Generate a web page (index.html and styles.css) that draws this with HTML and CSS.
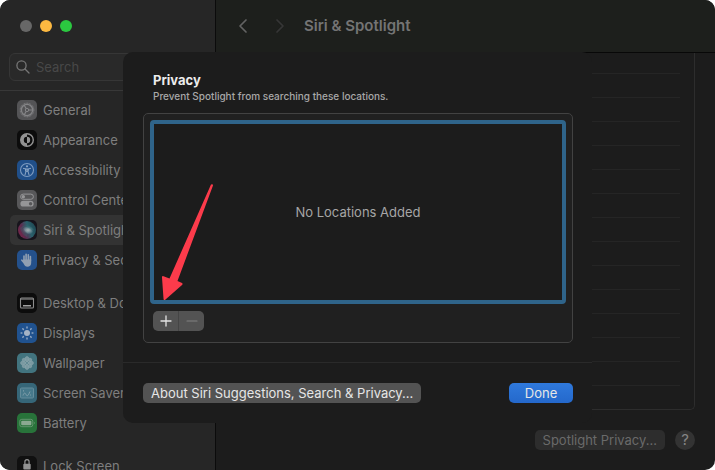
FILE: index.html
```
<!DOCTYPE html>
<html lang="en">
<head>
  <meta charset="UTF-8">
  <title>Siri &amp; Spotlight</title>
  <link rel="stylesheet" href="styles.css">
</head>
<body>
  <div class="window">
    <!-- Left column: window controls, search and settings list -->
    <aside class="sidebar">
      <div class="controls">
        <button class="dot dot-close" aria-label="Close"></button>
        <button class="dot dot-minimize" aria-label="Minimize"></button>
        <button class="dot dot-zoom" aria-label="Zoom"></button>
      </div>
      <label class="search">
        <svg width="14" height="14" viewBox="0 0 14 14" fill="none" stroke="#777" stroke-width="1.3" stroke-linecap="round"><circle cx="5.5" cy="5.5" r="4.6"/><path d="M9 9l4 4"/></svg>
        <input type="text" placeholder="Search" aria-label="Search">
      </label>
      <nav class="menu">
        <div class="group">
          <a class="item" href="#">
            <svg class="icon" viewBox="0 0 20 20"><rect width="20" height="20" rx="5" fill="#545456"/><g fill="none" stroke="#858587"><circle cx="10" cy="10" r="6.8" stroke-width="1" stroke-dasharray="1 .6"/><circle cx="10" cy="10" r="5.6" stroke-width="1.3"/><circle cx="10" cy="10" r="1.7"/><path d="M11.8 10h4M9.1 8.5l-2-3.5M9.1 11.5l-2 3.5" stroke-width="1.2"/></g></svg>
            General
          </a>
          <a class="item" href="#">
            <svg class="icon" viewBox="0 0 20 20"><rect width="20" height="20" rx="5" fill="#0c0c0c"/><circle cx="10" cy="10" r="6.3" fill="none" stroke="#929292" stroke-width="1.4"/><path d="M10 3.8a6.2 6.2 0 0 0 0 12.4v-3a3.2 3.2 0 0 1 0-6.4z" fill="#929292"/><path d="M10 6.8a3.2 3.2 0 0 1 0 6.4z" fill="#929292"/></svg>
            Appearance
          </a>
          <a class="item" href="#">
            <svg class="icon" viewBox="0 0 20 20"><rect width="20" height="20" rx="5" fill="#204f89"/><circle cx="10" cy="10" r="6.5" fill="none" stroke="#7d9bc0" stroke-width="1.1"/><circle cx="10" cy="6.3" r="1.1" fill="#8da7c6"/><path d="M6.4 8.4l2.6.6v2.4l-1 3.4M13.6 8.4l-2.6.6v2.4l1 3.4M9 9h2v2.3H9z" fill="none" stroke="#8da7c6" stroke-width="1" stroke-linecap="round"/></svg>
            Accessibility
          </a>
          <a class="item" href="#">
            <svg class="icon" viewBox="0 0 20 20"><rect width="20" height="20" rx="5" fill="#575759"/><rect x="3.6" y="4.1" width="12.8" height="5.2" rx="2.6" fill="none" stroke="#959597"/><circle cx="6.3" cy="6.7" r="1.7" fill="#959597"/><rect x="3.4" y="10.8" width="13.2" height="5.8" rx="2.9" fill="#959597"/><circle cx="13.6" cy="13.7" r="1.7" fill="#575759"/></svg>
            Control Center
          </a>
          <a class="item selected" href="#">
            <svg class="icon" viewBox="0 0 20 20">
              <defs>
                <linearGradient id="siri" x1="0" y1=".8" x2="1" y2=".4"><stop offset="0" stop-color="#7a2447"/><stop offset=".35" stop-color="#5c2c50"/><stop offset=".65" stop-color="#2b606c"/><stop offset="1" stop-color="#1f4a55"/></linearGradient>
                <radialGradient id="glow"><stop offset="0" stop-color="#a3adb0"/><stop offset="1" stop-color="#6f8c9b" stop-opacity="0"/></radialGradient>
              </defs>
              <rect width="20" height="20" rx="5" fill="#17141c"/><circle cx="10" cy="10" r="9" fill="url(#siri)"/><path d="M3 8q7-7 14 2-6-2-7 7-5-2-7-9" fill="#307c78" opacity=".3"/><path d="M5 6q8 1 12 7-3 3-6 1-4-3-6-8" fill="url(#glow)"/><ellipse cx="11" cy="10" rx="6" ry="4" fill="url(#glow)" opacity=".8"/>
            </svg>
            Siri &amp; Spotlight
          </a>
          <a class="item" href="#">
            <svg class="icon" viewBox="0 0 20 20"><rect width="20" height="20" rx="5" fill="#24518c"/><g fill="none" stroke="#91a0b2" stroke-width="1.6" stroke-linecap="round"><path d="M7 11V6M9.1 10V4.3M11.3 10V4.7M13.4 11V6.5M7.3 13l-2.4-2.8"/></g><path d="M6.2 9.5h8v3.2c0 2.4-1.6 4-3.8 4-1.8 0-2.9-1-3.6-2.6z" fill="#91a0b2"/></svg>
            Privacy &amp; Security
          </a>
        </div>
        <div class="group">
          <a class="item" href="#">
            <svg class="icon" viewBox="0 0 20 20"><rect width="20" height="20" rx="5" fill="#0c0c0c"/><rect x="3.5" y="5" width="13" height="10" rx="1" fill="none" stroke="#8c8c8c" stroke-width="1.1"/><path d="M3.5 6.1h13" stroke="#8c8c8c"/><path d="M6 12.8h8" stroke="#a0a0a0" stroke-width="1.6"/></svg>
            Desktop &amp; Dock
          </a>
          <a class="item" href="#">
            <svg class="icon" viewBox="0 0 20 20"><rect width="20" height="20" rx="5" fill="#20528f"/><circle cx="10" cy="10" r="3" fill="#a4b3c6"/><g stroke="#8ca3c0" stroke-width="1.5" stroke-linecap="round"><path d="M10 4.1v.8M10 15.1v.8M4.1 10h.8M15.1 10h.8M5.8 5.8l.6.6M13.6 13.6l.6.6M5.8 14.2l.6-.6M13.6 6.4l.6-.6"/></g></svg>
            Displays
          </a>
          <a class="item" href="#">
            <svg class="icon" viewBox="0 0 20 20"><rect width="20" height="20" rx="5" fill="#42747f"/><g fill="#7999a1" stroke="#92aab0" stroke-width=".5"><ellipse cx="10" cy="5.8" rx="1.8" ry="2.3"/><ellipse cx="10" cy="14.2" rx="1.8" ry="2.3"/><ellipse cx="5.8" cy="10" rx="2.3" ry="1.8"/><ellipse cx="14.2" cy="10" rx="2.3" ry="1.8"/><circle cx="7" cy="7" r="1.8"/><circle cx="13" cy="7" r="1.8"/><circle cx="7" cy="13" r="1.8"/><circle cx="13" cy="13" r="1.8"/></g><circle cx="10" cy="10" r="1.6" fill="#5d8791" stroke="#9bb0b5" stroke-width=".7"/></svg>
            Wallpaper
          </a>
          <a class="item" href="#">
            <svg class="icon" viewBox="0 0 20 20"><rect width="20" height="20" rx="5" fill="#366678"/><rect x="3.5" y="5" width="13" height="10" rx="1" fill="#47798b" stroke="#648c9b"/><path d="M6 12.5c1-3 2-3 3-1s2 2 4-3M6.5 7.2v1.3M13.5 11.5v1" fill="none" stroke="#84a2ad" stroke-width=".9"/></svg>
            Screen Saver
          </a>
          <a class="item" href="#">
            <svg class="icon" viewBox="0 0 20 20"><rect width="20" height="20" rx="5" fill="#28733a"/><rect x="2.8" y="6.3" width="13" height="7.4" rx="2" fill="none" stroke="#6b9975" stroke-width=".9"/><rect x="4.2" y="7.7" width="10.2" height="4.6" rx="1" fill="#8ba991"/><path d="M17 8.7q1.6 1.3 0 2.6z" fill="#6b9975"/></svg>
            Battery
          </a>
        </div>
        <div class="group">
          <a class="item" href="#">
            <svg class="icon" viewBox="0 0 20 20"><rect width="20" height="20" rx="5" fill="#101010"/><rect x="6.3" y="7.8" width="7.4" height="5.6" rx="1" fill="#929292"/><path d="M7.9 8V5.8a2.1 2.1 0 0 1 4.2 0V8" fill="none" stroke="#929292" stroke-width="1.2"/></svg>
            Lock Screen
          </a>
        </div>
      </nav>
    </aside>

    <!-- Right column: settings pane behind the sheet -->
    <main class="main">
      <header class="toolbar">
        <button class="nav-button" aria-label="Back"><svg width="10" height="16" viewBox="0 0 10 16" fill="none" stroke="#636363" stroke-width="1.7" stroke-linecap="round" stroke-linejoin="round"><path d="M8 2L2 8l6 6"/></svg></button>
        <button class="nav-button" aria-label="Forward"><svg width="10" height="16" viewBox="0 0 10 16" fill="none" stroke="#363636" stroke-width="1.7" stroke-linecap="round" stroke-linejoin="round"><path d="M2 2l6 6-6 6"/></svg></button>
        <h1>Siri &amp; Spotlight</h1>
      </header>
      <ul class="results">
        <li></li><li></li><li></li><li></li><li></li><li></li><li></li><li></li>
        <li></li><li></li><li></li><li></li><li></li><li></li><li></li>
      </ul>
      <footer class="footer">
        <button class="button dimmed">Spotlight Privacy...</button>
        <button class="help">?</button>
      </footer>
    </main>

    <!-- Privacy sheet -->
    <section class="sheet" role="dialog" aria-labelledby="sheetTitle">
      <div class="sheet-body">
        <h2 id="sheetTitle">Privacy</h2>
        <p>Prevent Spotlight from searching these locations.</p>
        <div class="panel">
          <div class="locations" tabindex="0">No Locations Added</div>
          <div class="segmented">
            <button aria-label="Add"><svg width="12" height="12" viewBox="0 0 12 12" stroke="#e4e4e4" stroke-width="1.3" stroke-linecap="round"><path d="M6 1v10M1 6h10"/></svg></button>
            <button aria-label="Remove" disabled><svg width="12" height="12" viewBox="0 0 12 12" stroke="#818181" stroke-width="1.2" stroke-linecap="round"><path d="M1 6h10"/></svg></button>
          </div>
        </div>
      </div>
      <div class="sheet-footer">
        <button class="button">About Siri Suggestions, Search &amp; Privacy...</button>
        <button class="button primary">Done</button>
      </div>
      <!-- Arrow pointing at the add button -->
      <svg class="arrow" width="54" height="122" viewBox="0 0 54 122"><path d="M51 1.5Q53 .5 53 2.5L17.5 98l4.500 2q1.200 1 0 2L5.500 116.500q-2 1.500-2-1L2 94.500q0-2 1.500-1.300L9.500 95.500z" fill="#fc3b4b"/></svg>
    </section>
  </div>
</body>
</html>
```
FILE: styles.css
```
* {
  box-sizing: border-box;
}
body {
  margin: 0;
  background: #fff;
  font-family: Inter, sans-serif;
  font-size: 13px;
  line-height: 16px;
}
button {
  border: 0;
  padding: 0;
  font: inherit;
}
svg {
  display: block;
  flex-shrink: 0;
}
.window {
  position: relative;
  display: flex;
  height: 100vh;
  overflow: hidden;
  border-radius: 10px;
  background: #1c1c1c;
}

/* Sidebar */
.sidebar {
  width: 216px;
  flex-shrink: 0;
  background: #262626;
  border-right: 1px solid #0b0b0b;
}
.controls {
  display: flex;
  gap: 8px;
  padding: 20px 20px 21px;
}
.dot {
  width: 12px;
  height: 12px;
  border-radius: 50%;
}
.dot-close {
  background: #676767;
}
.dot-minimize {
  background: #fdb941;
}
.dot-zoom {
  background: #2bc840;
}
.search {
  display: flex;
  align-items: center;
  gap: 6px;
  height: 28px;
  margin: 0 9px 9px;
  padding: 0 6px;
  border: 1px solid #363636;
  border-radius: 6px;
  background: #292929;
}
.search input {
  flex: 1;
  min-width: 0;
  padding: 0;
  border: 0;
  outline: 0;
  background: none;
  color: #8a8a8a;
  font: inherit;
}
.search input::placeholder {
  color: #484848;
}
.menu {
  padding: 4px 10px;
  border-top: 1px solid #383838;
}
.group {
  margin-bottom: 13px;
}
.item {
  display: flex;
  align-items: center;
  gap: 6px;
  height: 30px;
  padding: 0 7px;
  border-radius: 5px;
  color: #7e7e7e;
  white-space: nowrap;
  text-decoration: none;
}
.item.selected {
  background: #333;
}
.icon {
  width: 20px;
  height: 20px;
}

/* Settings pane */
.main {
  flex: 1;
  min-width: 0;
}
.toolbar {
  display: flex;
  align-items: center;
  height: 53px;
  padding-left: 22px;
  background: #1d1f1c;
  border-bottom: 1px solid #080808;
}
.nav-button {
  width: 10px;
  margin-right: 27px;
  background: none;
}
.toolbar h1 {
  margin: 0 0 0 -8px;
  color: #747474;
  font-size: 15px;
  font-weight: 600;
  line-height: 20px;
}
.results {
  margin: 0 20px;
  padding: 0 14px;
  list-style: none;
  border: 1px solid #2d2d2d;
  border-top: 0;
  border-radius: 0 0 5px 5px;
}
.results li {
  height: 24px;
  border-bottom: 1px solid #252525;
}
.results li:first-child {
  height: 21px;
}
.results li:last-child {
  height: 23px;
  border-bottom: 0;
}
.footer {
  display: flex;
  justify-content: flex-end;
  gap: 10px;
  padding: 20px;
}
.button {
  height: 20px;
  padding: 0 8px;
  border-radius: 5px;
  background: #535353;
  color: #e6e6e6;
  white-space: nowrap;
}
.button.dimmed {
  background: #2d2d2d;
  color: #6a6a6a;
}
.help {
  width: 20px;
  height: 20px;
  border-radius: 50%;
  background: #333;
  color: #858585;
  font-size: 15px;
}

/* Sheet lies over both columns */
.sheet {
  position: absolute;
  top: 52px;
  left: 123px;
  right: 123px;
  border-radius: 10px;
  background: #1c1c1c;
}
.sheet-body {
  padding: 20px 19px 19px 20px;
  border-bottom: 1px solid #2a2a2a;
}
.sheet h2 {
  margin: 0 10px;
  color: #ececec;
  font-size: 13px;
  line-height: 17px;
}
.sheet p {
  margin: 0 10px 10px;
  color: #a8a8a8;
  font-size: 10px;
  font-weight: 500;
  line-height: 14px;
}
.panel {
  padding: 6px;
  border: 1px solid #424242;
  border-radius: 5px;
  background: #202020;
}
.locations {
  display: flex;
  align-items: center;
  justify-content: center;
  height: 184px;
  border: 4px solid #2f648a;
  border-radius: 4px;
  background: #1c1c1c;
  color: #a6a6a6;
  outline: 0;
}
.segmented {
  display: inline-flex;
  margin: 7px 3px 5px;
  border-radius: 5px;
  background: #535353;
  vertical-align: top;
}
.segmented button {
  display: flex;
  align-items: center;
  justify-content: center;
  width: 25px;
  height: 20px;
  background: none;
}
.segmented button + button {
  width: 26px;
  border-left: 1px solid #454545;
}
.sheet-footer {
  display: flex;
  justify-content: space-between;
  padding: 20px 19px 20px 20px;
}
.button.primary {
  width: 64px;
  background: linear-gradient(#2f79dc, #2468cb);
}
.arrow {
  position: absolute;
  left: 37px;
  top: 131px;
  pointer-events: none;
}
```
